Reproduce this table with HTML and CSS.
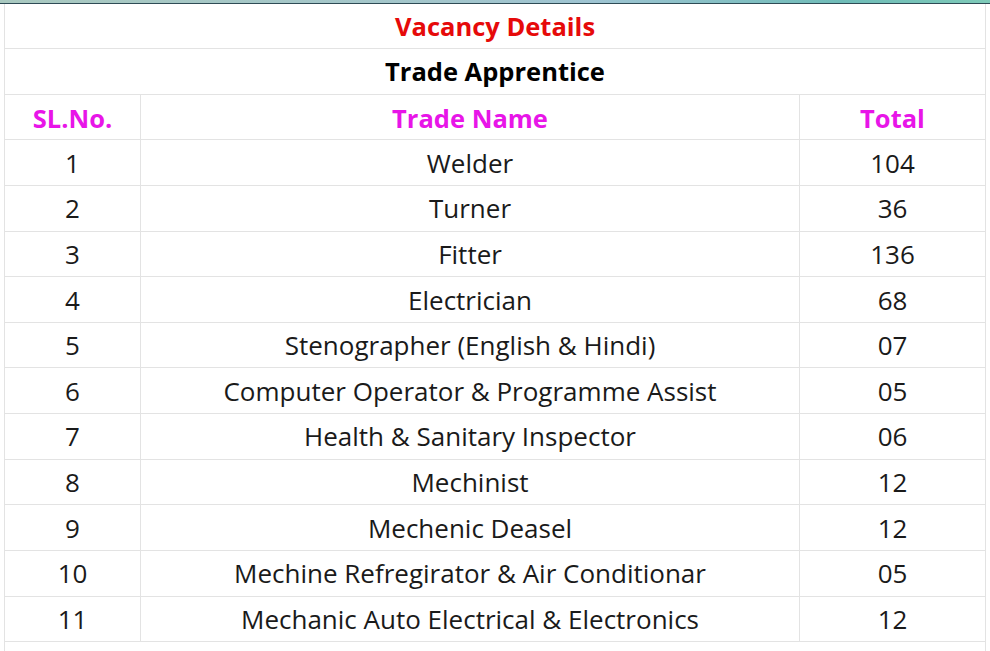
FILE: index.html
```html
<!DOCTYPE html>
<html>
<head>
<meta charset="utf-8">
<link rel="stylesheet" href="styles.css">
</head>
<body>
<div class="topbar"></div>
<div class="wrap">
<table class="vac">
<colgroup><col class="c1"><col class="c2"><col class="c3"></colgroup>
<tr class="hrow"><td colspan="3" class="title">Vacancy Details</td></tr>
<tr class="hrow"><td colspan="3" class="sub">Trade Apprentice</td></tr>
<tr class="head"><td>SL.No.</td><td>Trade Name</td><td>Total</td></tr>
<tr><td>1</td><td>Welder</td><td>104</td></tr>
<tr><td>2</td><td>Turner</td><td>36</td></tr>
<tr><td>3</td><td>Fitter</td><td>136</td></tr>
<tr><td>4</td><td>Electrician</td><td>68</td></tr>
<tr><td>5</td><td>Stenographer (English &amp; Hindi)</td><td>07</td></tr>
<tr><td>6</td><td>Computer Operator &amp; Programme Assist</td><td>05</td></tr>
<tr><td>7</td><td>Health &amp; Sanitary Inspector</td><td>06</td></tr>
<tr><td>8</td><td>Mechinist</td><td>12</td></tr>
<tr><td>9</td><td>Mechenic Deasel</td><td>12</td></tr>
<tr><td>10</td><td>Mechine Refregirator &amp; Air Conditionar</td><td>05</td></tr>
<tr><td>11</td><td>Mechanic Auto Electrical &amp; Electronics</td><td>12</td></tr>
<tr><td colspan="3">&nbsp;</td></tr>
</table>
</div>
</body>
</html>
```
FILE: styles.css
```css
html, body {
  margin: 0;
  padding: 0;
  background: #ffffff;
  overflow: hidden;
}
.topbar {
  height: 3px;
  background: linear-gradient(90deg, #a9c9c0 0%, #a3c6cc 45%, #9ec4d2 60%, #6fbcb8 85%, #7ecab8 100%);
  border-bottom: 1px solid #2e4b55;
}
.wrap {
  padding-left: 4px;
}
.vac {
  width: 982px;
  border-collapse: collapse;
  font-family: "Open Sans", "Noto Sans", sans-serif;
  font-size: 26px;
  color: #1a1a1a;
}
.c1 { width: 136px; }
.c3 { width: 186px; }
.vac td {
  border: 1px solid #e3e3e3;
  border-top: none;
  height: 44.65px;
  padding: 0;
  text-align: center;
  vertical-align: middle;
  line-height: 1;
}
.vac tr.hrow td {
  height: 43px;
  padding-top: 1px;
}
.vac tr.hrow + tr.hrow td {
  height: 43.65px;
}
.vac tr.head td {
  height: 40.65px;
  padding-top: 4px;
}
.vac tr:first-child td {
  height: 43px;
}
.title {
  color: #e60a0a;
  font-weight: 700;
  font-size: 25.5px;
}
.sub {
  color: #000;
  font-weight: 700;
  font-size: 25.5px;
}
.head td {
  color: #e815e8;
  font-weight: 700;
  font-size: 25.5px;
}
```
